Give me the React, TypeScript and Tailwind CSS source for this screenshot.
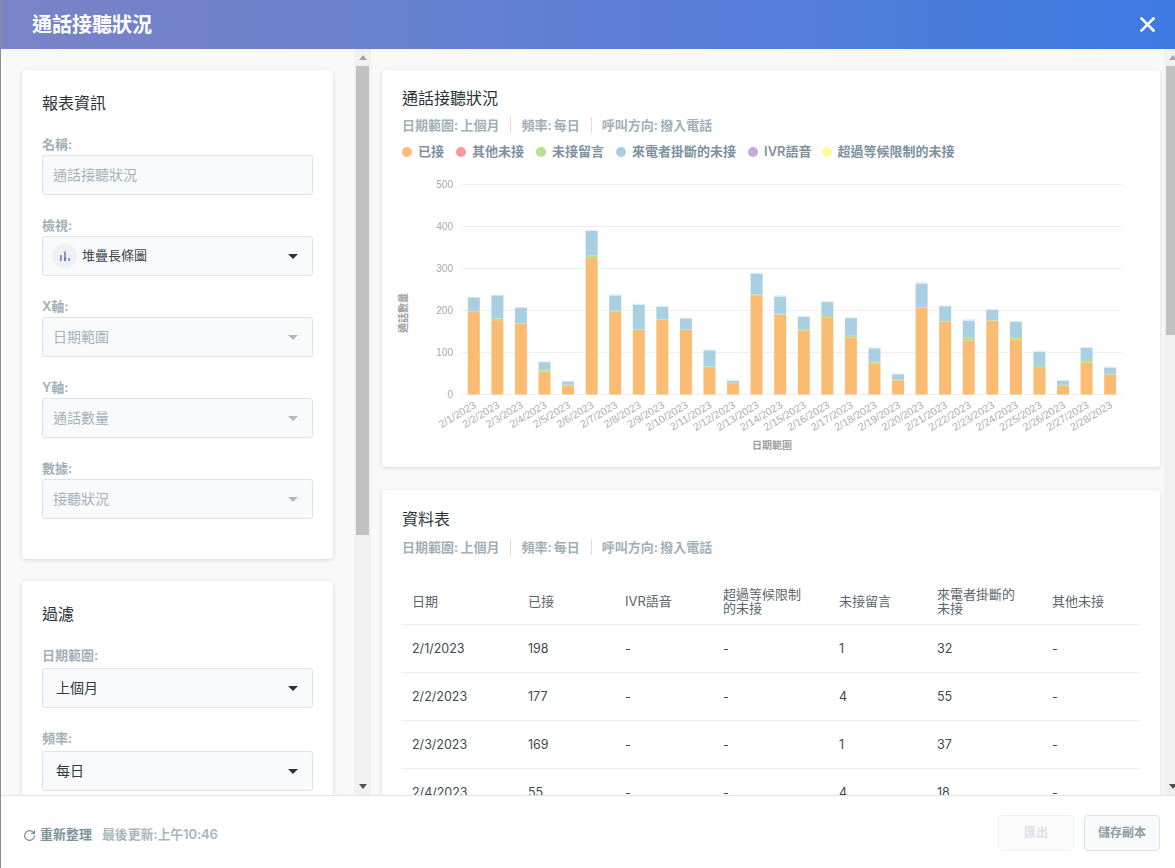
import { RotateCw } from "lucide-react";

// answered, voicemail, abandoned, thin top strip
const bars: [number, number, number, number][] = [
  [198, 1, 32, 0], [177, 4, 55, 0], [169, 1, 37, 0], [55, 4, 18, 2],
  [22, 1, 8, 0], [325, 6, 59, 0], [197, 3, 36, 2], [154, 1, 59, 2],
  [178, 1, 30, 2], [154, 1, 26, 2], [63, 4, 38, 2], [27, 1, 5, 2],
  [236, 2, 50, 0], [190, 2, 41, 3], [153, 2, 30, 2], [184, 3, 33, 2],
  [136, 4, 42, 1], [74, 5, 31, 2], [34, 2, 12, 2], [206, 1, 57, 3],
  [174, 1, 35, 2], [129, 6, 41, 3], [176, 1, 25, 0], [131, 4, 38, 2],
  [63, 5, 34, 2], [21, 2, 10, 2], [76, 6, 29, 2], [48, 1, 15, 2],
];

const legend = [
  { label: "已接", color: "bg-[#fbbd77]", shift: "" },
  { label: "其他未接", color: "bg-[#f79a9c]", shift: "" },
  { label: "未接留言", color: "bg-[#b5e08f]", shift: "" },
  { label: "來電者掛斷的未接", color: "bg-[#a9cfe3]", shift: "" },
  { label: "IVR語音", color: "bg-[#c6add8]", shift: "" },
  { label: "超過等候限制的未接", color: "bg-[#fdf99d]", shift: "-ml-[2px]" },
];

const rows = [
  ["2/1/2023", "198", "-", "-", "1", "32", "-"],
  ["2/2/2023", "177", "-", "-", "4", "55", "-"],
  ["2/3/2023", "169", "-", "-", "1", "37", "-"],
  ["2/4/2023", "55", "-", "-", "4", "18", "-"],
];

const columns = "grid grid-cols-[126px_97px_98px_116px_98px_115px_1fr]";

function Caret({ disabled }: { disabled?: boolean }) {
  return (
    <svg width="10" height="5" viewBox="0 0 10 5" className={disabled ? "fill-[#b3b8bb]" : "fill-[#263238]"}>
      <path d="M0 0h10L5 5z" />
    </svg>
  );
}

function Field({ label, children, tight }: { label: string; children: React.ReactNode; tight?: boolean }) {
  return (
    <div>
      <div className={`h-[18px] text-[13px] leading-[18px] font-semibold text-[#9fb0b8] ${tight ? "mb-[2px]" : "mb-[4px]"}`}>
        {label}
      </div>
      {children}
    </div>
  );
}

function Select({ value, disabled }: { value: string; disabled?: boolean }) {
  return (
    <div className={`flex h-10 items-center justify-between rounded-[3px] border border-[#dde3e8] bg-[#f9fafb] pr-[14px] text-sm ${disabled ? "pl-[10px] text-[#a3b3bb]" : "pl-[13px] text-[#2f3a40]"}`}>
      <span>{value}</span>
      <Caret disabled={disabled} />
    </div>
  );
}

function Scrollbar({ thumb, narrow }: { thumb: string; narrow?: boolean }) {
  return (
    <div className={`flex h-full shrink-0 flex-col bg-[#f1f1f1] ${narrow ? "w-[11px] items-start pl-[2px]" : "w-[17px] items-center"}`}>
      <div className={`flex h-[17px] items-center ${narrow ? "pl-[3px]" : ""}`}>
        <svg width="8" height="5" viewBox="0 0 8 5" className="fill-[#a3a3a3]">
          <path d="M0 5h8L4 0z" />
        </svg>
      </div>
      <div className={`bg-[#c1c1c1] ${thumb} ${narrow ? "w-[9px]" : "w-[13px]"}`} />
      <div className="flex-1" />
      <div className={`flex h-[17px] items-center ${narrow ? "pl-[3px]" : ""}`}>
        <svg width="8" height="5" viewBox="0 0 8 5" className="fill-[#505050]">
          <path d="M0 0h8L4 5z" />
        </svg>
      </div>
    </div>
  );
}

function Filters() {
  return (
    <div className="flex h-[18px] items-center text-[13px] leading-[18px] font-semibold text-[#9fb0b8] [word-spacing:-1px]">
      <span>日期範圍: 上個月</span>
      <span className="mr-[10px] ml-[11px] h-4 w-px bg-[#d9dee1]" />
      <span>頻率: 每日</span>
      <span className="mr-[10px] ml-[11px] h-4 w-px bg-[#d9dee1]" />
      <span>呼叫方向: 撥入電話</span>
    </div>
  );
}

function Chart() {
  const y = (v: number) => 394.5 - v * 0.42;
  return (
    <svg viewBox="382 175 778 285" width="778" height="285" className="mt-[14px] block font-['Liberation_Sans','Noto_Sans_CJK_TC',sans-serif]">
      {[0, 100, 200, 300, 400, 500].map((v) => (
        <g key={v}>
          <line x1="462" x2="1122" y1={y(v)} y2={y(v)} stroke="#eeeff0" />
          <text x="453" y={y(v) + 3.5} textAnchor="end" className="fill-[#a8a8a8] text-[10px]">{v}</text>
        </g>
      ))}
      {bars.map(([a, v, b, e], i) => {
        const x = 462 + 23.57 * (i + 0.5) - 6;
        const segments = [
          { h: a, fill: "#fabb73" },
          { h: v, fill: "#b7e08f" },
          { h: b, fill: "#a9cfe2" },
          { h: e, fill: "#dbeaf2" },
        ];
        let base = 0;
        return (
          <g key={i}>
            {segments.map((s, k) => {
              base += s.h;
              return <rect key={k} x={x} width="12" y={y(base)} height={s.h * 0.42} fill={s.fill} />;
            })}
            <text
              x={x + 9}
              y="407"
              textAnchor="end"
              transform={`rotate(-31 ${x + 9} 407)`}
              className="fill-[#adadad] text-[10.6px]"
            >
              {`2/${i + 1}/2023`}
            </text>
          </g>
        );
      })}
      <text
        x="407"
        y="313"
        textAnchor="middle"
        transform="rotate(-90 407 313)"
        className="fill-[#a0a0a0] text-[10px] font-bold"
      >
        通話數量
      </text>
      <text x="772" y="449" textAnchor="middle" className="fill-[#a0a0a0] text-[10px] font-bold">
        日期範圍
      </text>
    </svg>
  );
}

export default function App() {
  return (
    <div className="flex h-[868px] w-[1175px] overflow-hidden bg-white font-['Inter','Noto_Sans_CJK_TC',sans-serif]">
      <div className="w-px shrink-0 bg-[#8d8f94]" />
      <div className="flex min-w-0 flex-1 flex-col">
        <header className="flex h-[49px] shrink-0 items-center justify-between bg-linear-to-r from-[#7a83c6] to-[#3c7ae2] pr-[20px] pl-[31px]">
          <h1 className="text-[20px] font-bold text-white">通話接聽狀況</h1>
          <svg width="15" height="15" viewBox="0 0 15 15" className="stroke-white" strokeWidth="2.6" strokeLinecap="square">
            <path d="M1.5 1.5l12 12M13.5 1.5l-12 12" />
          </svg>
        </header>

        <div className="flex min-h-0 flex-1">
          <div className="flex w-[370px] shrink-0">
            <div className="min-w-0 flex-1 overflow-hidden bg-[#f9f9f9] pt-[21px] pr-[21px] pl-[21px]">
              <section className="rounded-[4px] bg-white px-5 pt-[21px] pb-10 shadow-[0_1px_4px_rgba(0,0,0,0.14)]">
                <h2 className="h-6 text-base leading-6 font-normal text-[#2a3539]">報表資訊</h2>
                <div className="mt-5 flex flex-col gap-[21px]">
                  <Field label="名稱:" tight>
                    <div className="flex h-10 items-center rounded-[3px] border border-[#dde3e8] bg-[#f9fafb] pl-[10px] text-sm text-[#a3b3bb]">
                      通話接聽狀況
                    </div>
                  </Field>
                  <Field label="檢視:" tight>
                    <div className="flex h-10 items-center justify-between rounded-[3px] border border-[#dde3e8] bg-[#f9fafb] pr-[14px] pl-[10px]">
                      <span className="flex items-center gap-[6px] text-[13px] text-[#39454b]">
                        <span className="flex h-6 w-6 items-center justify-center rounded-full bg-[#eef0f3]">
                          <svg width="12" height="12" viewBox="0 0 12 12">
                            <rect x="1" y="5" width="1.8" height="6" fill="#7a8ad0" />
                            <rect x="5.1" y="1.5" width="1.8" height="5" fill="#7a8ad0" />
                            <rect x="5.1" y="6.5" width="1.8" height="4.5" fill="#5b6fc4" />
                            <rect x="9.2" y="8" width="1.8" height="3" fill="#7a8ad0" />
                          </svg>
                        </span>
                        <span className="-ml-px">堆疊長條圖</span>
                      </span>
                      <Caret />
                    </div>
                  </Field>
                  <Field label="X軸:" tight>
                    <Select value="日期範圍" disabled />
                  </Field>
                  <Field label="Y軸:" tight>
                    <Select value="通話數量" disabled />
                  </Field>
                  <Field label="數據:" tight>
                    <Select value="接聽狀況" disabled />
                  </Field>
                </div>
              </section>

              <section className="mt-[22px] rounded-[4px] bg-white px-5 pt-[21px] pb-10 shadow-[0_1px_4px_rgba(0,0,0,0.14)]">
                <h2 className="h-6 text-base leading-6 font-normal text-[#2a3539]">過濾</h2>
                <div className="mt-5 flex flex-col gap-[21px]">
                  <Field label="日期範圍:">
                    <Select value="上個月" />
                  </Field>
                  <Field label="頻率:">
                    <Select value="每日" />
                  </Field>
                </div>
              </section>
            </div>
            <Scrollbar thumb="h-[469px]" />
          </div>

          <div className="flex min-w-0 flex-1">
            <div className="min-w-0 flex-1 overflow-hidden bg-[#f9f9f9] pt-[21px] pr-[4px] pl-[11px]">
              <section className="h-[397px] rounded-[4px] bg-white pt-4 shadow-[0_1px_4px_rgba(0,0,0,0.14)]">
                <div className="px-5">
                  <h2 className="h-6 text-base leading-6 font-normal text-[#2a3539]">通話接聽狀況</h2>
                  <div className="mt-[6px]">
                    <Filters />
                  </div>
                  <div className="mt-[9px] flex h-[18px] items-center gap-3 text-[13px] font-semibold text-[#7d929c]">
                    {legend.map((item) => (
                      <span key={item.label} className={`flex items-center gap-[6px] ${item.shift}`}>
                        <span className={`h-[10px] w-[10px] rounded-full ${item.color}`} />
                        {item.label}
                      </span>
                    ))}
                  </div>
                </div>
                <Chart />
              </section>

              <section className="mt-[23px] rounded-[4px] bg-white px-5 pt-[17px] pb-5 shadow-[0_1px_4px_rgba(0,0,0,0.14)]">
                <h2 className="h-6 text-base leading-6 font-normal text-[#2a3539]">資料表</h2>
                <div className="mt-[7px]">
                  <Filters />
                </div>
                <div className={`mt-[22px] h-[47px] items-center border-b border-[#eceff1] text-[13px] leading-[14px] text-[#59656b] ${columns}`}>
                  <span className="pl-[10px]">日期</span>
                  <span>已接</span>
                  <span>IVR語音</span>
                  <span className="w-[80px]">超過等候限制的未接</span>
                  <span>未接留言</span>
                  <span className="w-[80px]">來電者掛斷的未接</span>
                  <span>其他未接</span>
                </div>
                {rows.map((row) => (
                  <div key={row[0]} className={`h-12 items-center border-b border-[#eceff1] pt-[2px] text-[12.5px] text-[#3e4a50] ${columns}`}>
                    {row.map((cell, i) => (
                      <span key={i} className={i === 0 ? "pl-[10px]" : ""}>{cell}</span>
                    ))}
                  </div>
                ))}
              </section>
            </div>
            <Scrollbar thumb="h-[269px]" narrow />
          </div>
        </div>

        <footer className="flex h-[73px] shrink-0 items-center justify-between border-t border-[#e3e6e9] bg-white pt-[2px] pr-[15px] pl-[22px]">
          <div className="flex items-center pt-[4px] text-[13px]">
            <RotateCw size={13} strokeWidth={2} className="text-[#6f858f]" />
            <span className="ml-[4px] font-semibold text-[#7d929c]">重新整理</span>
            <span className="ml-[10px] font-semibold tracking-[-0.15px] text-[#a8b7bf]">最後更新:上午10:46</span>
          </div>
          <div className="flex gap-[10px]">
            <button className="h-9 w-[76px] rounded-[4px] border border-[#f0f2f4] bg-[#fcfcfd] text-xs font-bold text-[#dbe1e5]">
              匯出
            </button>
            <button className="h-9 w-[76px] rounded-[4px] border border-[#dde3e8] bg-[#f9fafb] text-xs font-bold text-[#8a9da6]">
              儲存副本
            </button>
          </div>
        </footer>
      </div>
    </div>
  );
}
